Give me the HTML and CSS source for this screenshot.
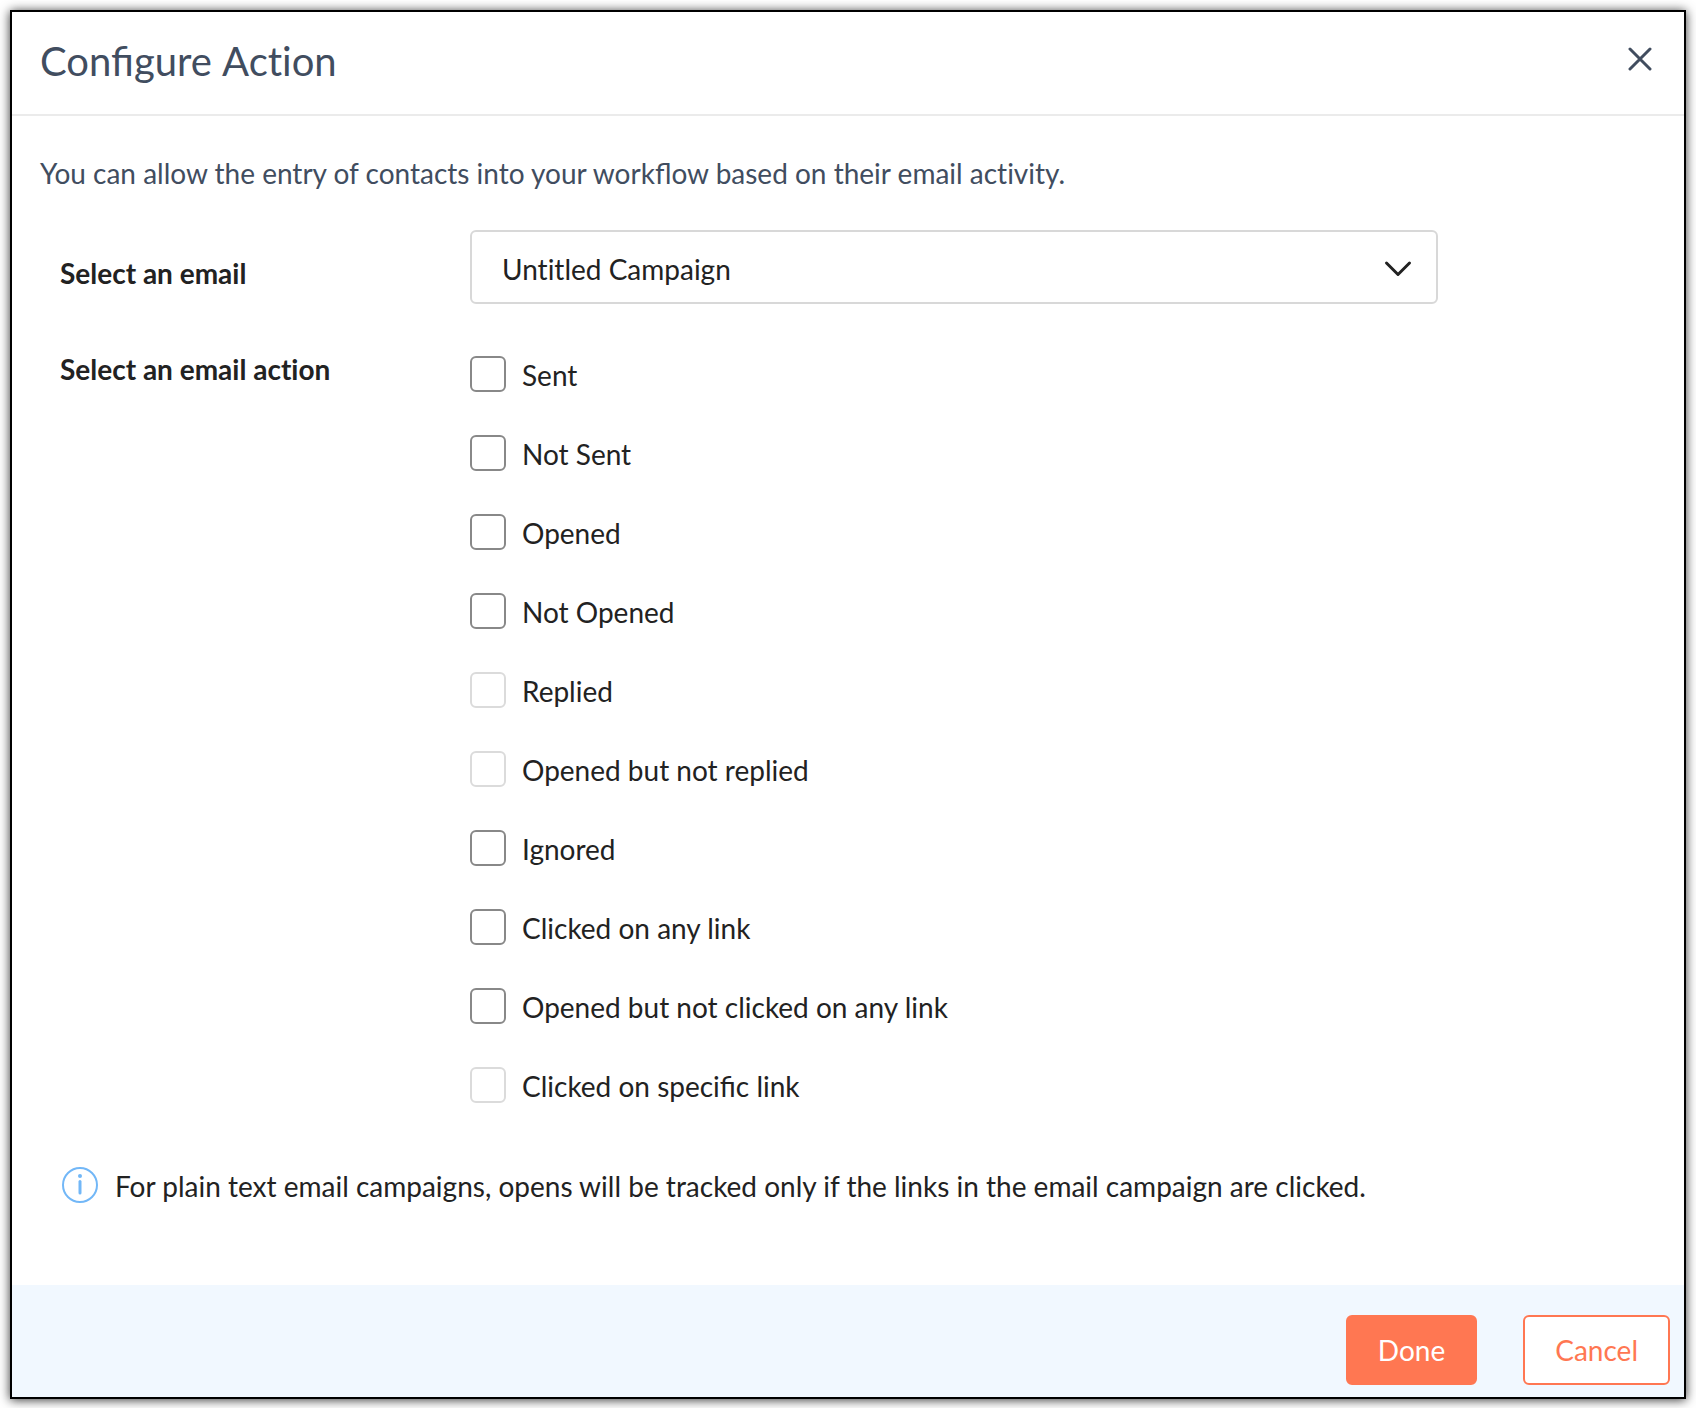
FILE: index.html
```html
<!DOCTYPE html>
<html lang="en">
<head>
<meta charset="utf-8">
<meta name="viewport" content="width=device-width, initial-scale=1">
<title>Configure Action</title>
<link rel="stylesheet" href="styles.css">
</head>
<body>
<form class="dialog" role="dialog" aria-labelledby="dialog-title">
  <header class="dialog-header">
    <h1 class="dialog-title" id="dialog-title">Configure <span class="no-ligatures">Action</span></h1>
    <button class="close-button" type="button" aria-label="Close">
      <svg width="24" height="24" viewBox="0 0 24 24" fill="none" stroke="currentColor" stroke-width="3" stroke-linecap="round"><path d="M2 2l20 20M22 2l-20 20"/></svg>
    </button>
  </header>
  <main class="dialog-body">
    <p class="intro">You can allow the entry of contacts into your workflow based on their email <span class="no-ligatures">activity.</span></p>
    <div class="field">
      <label class="field-label field-label-select" for="email">Select an email</label>
      <div class="select-box">
        <select class="select no-ligatures" id="email">
          <option>Untitled Campaign</option>
        </select>
        <svg class="select-arrow" width="28" height="18" viewBox="0 0 28 18" fill="none" stroke="currentColor" stroke-width="3" stroke-linecap="round" stroke-linejoin="round"><path d="M2.5 3L14 14.5L25.5 3"/></svg>
      </div>
    </div>
    <div class="field" role="group" aria-labelledby="action-label">
      <span class="field-label no-ligatures" id="action-label">Select an email action</span>
      <div class="options">
        <label class="option"><input class="checkbox" type="checkbox">Sent</label>
        <label class="option"><input class="checkbox" type="checkbox">Not Sent</label>
        <label class="option"><input class="checkbox" type="checkbox">Opened</label>
        <label class="option"><input class="checkbox" type="checkbox">Not Opened</label>
        <label class="option"><input class="checkbox" type="checkbox" disabled>Replied</label>
        <label class="option"><input class="checkbox" type="checkbox" disabled>Opened but not replied</label>
        <label class="option"><input class="checkbox" type="checkbox">Ignored</label>
        <label class="option"><input class="checkbox" type="checkbox">Clicked on any link</label>
        <label class="option"><input class="checkbox" type="checkbox">Opened but not clicked on any link</label>
        <label class="option"><input class="checkbox" type="checkbox" disabled>Clicked on specific link</label>
      </div>
    </div>
    <p class="note">
      <svg class="note-icon" width="36" height="36" viewBox="0 0 36 36" aria-hidden="true"><circle cx="18" cy="18" r="17" fill="none" stroke="currentColor" stroke-width="2"/><circle cx="18" cy="9" r="2" fill="currentColor"/><path d="M18 14.5V26" stroke="currentColor" stroke-width="3" stroke-linecap="round"/></svg>
      <span>For plain text email campaigns, opens will be tracked only if the links in the email campaign are clicked.</span>
    </p>
  </main>
  <footer class="dialog-footer">
    <button class="button button-primary" type="submit">Done</button>
    <button class="button" type="button">Cancel</button>
  </footer>
</form>
</body>
</html>
```

FILE: styles.css
```css
* {
  box-sizing: border-box;
}

body {
  margin: 0;
  padding: 10px;
  background: #fff;
  color: #222;
  font-family: Lato, "Liberation Sans", sans-serif;
  font-size: 28px;
  line-height: 34px;
}

.dialog {
  background: #fff;
  border: 2px solid #000;
  box-shadow: 0 1px 10px rgba(0, 0, 0, 0.8);
}

.dialog-header {
  display: flex;
  justify-content: space-between;
  align-items: flex-start;
  padding: 25px 22px 29px 28px;
  border-bottom: 2px solid #ebebeb;
  color: #414d5f;
}

.dialog-title {
  margin: 0;
  font-size: 40px;
  font-weight: 400;
  line-height: 48px;
}

.close-button {
  display: flex;
  justify-content: center;
  align-items: center;
  width: 44px;
  height: 44px;
  padding: 0;
  border: 0;
  background: none;
  color: inherit;
  cursor: pointer;
}

.dialog-body {
  padding: 40px 28px 80px;
}

.intro {
  margin: 0 0 40px;
  color: #414d5f;
}

.field {
  display: grid;
  grid-template-columns: 410px minmax(0, 968px);
  align-items: start;
  margin-bottom: 48px;
  padding-left: 20px;
}

.field-label {
  font-weight: 700;
}

.field-label-select {
  padding-top: 26px;
}

.select-box {
  position: relative;
}

.select {
  appearance: none;
  width: 100%;
  height: 74px;
  padding: 4px 80px 0 30px;
  border: 2px solid #d8d8d8;
  border-radius: 6px;
  background: #fff;
  color: inherit;
  font: inherit;
}

.select-arrow {
  position: absolute;
  top: 30px;
  right: 26px;
  pointer-events: none;
}

.no-ligatures {
  font-variant-ligatures: no-common-ligatures;
}

.options {
  display: grid;
  justify-items: start;
  gap: 41px;
  padding-top: 4px;
}

.option {
  display: flex;
  align-items: flex-start;
  gap: 16px;
  line-height: 38px;
}

.checkbox {
  appearance: none;
  flex: none;
  width: 36px;
  height: 36px;
  margin: 0;
  border: 2px solid #888;
  border-radius: 6px;
  background: #fff;
}

.checkbox:checked {
  background: #ff7752;
}

.checkbox:disabled {
  border-color: #dbdbdb;
}

.note {
  display: flex;
  gap: 17px;
  margin: 62px 0 0;
  padding-left: 22px;
  line-height: 38px;
}

.note-icon {
  flex: none;
  color: #72b7f7;
}

.dialog-footer {
  display: flex;
  justify-content: flex-end;
  gap: 46px;
  padding: 30px 14px 12px;
  background: #f1f8ff;
}

.button {
  height: 70px;
  padding: 0 30px;
  border: 2px solid #ff7752;
  border-radius: 6px;
  background: #fff;
  color: #ff7752;
  font: inherit;
  cursor: pointer;
}

.button-primary {
  background: #ff7752;
  color: #fff;
}
```
